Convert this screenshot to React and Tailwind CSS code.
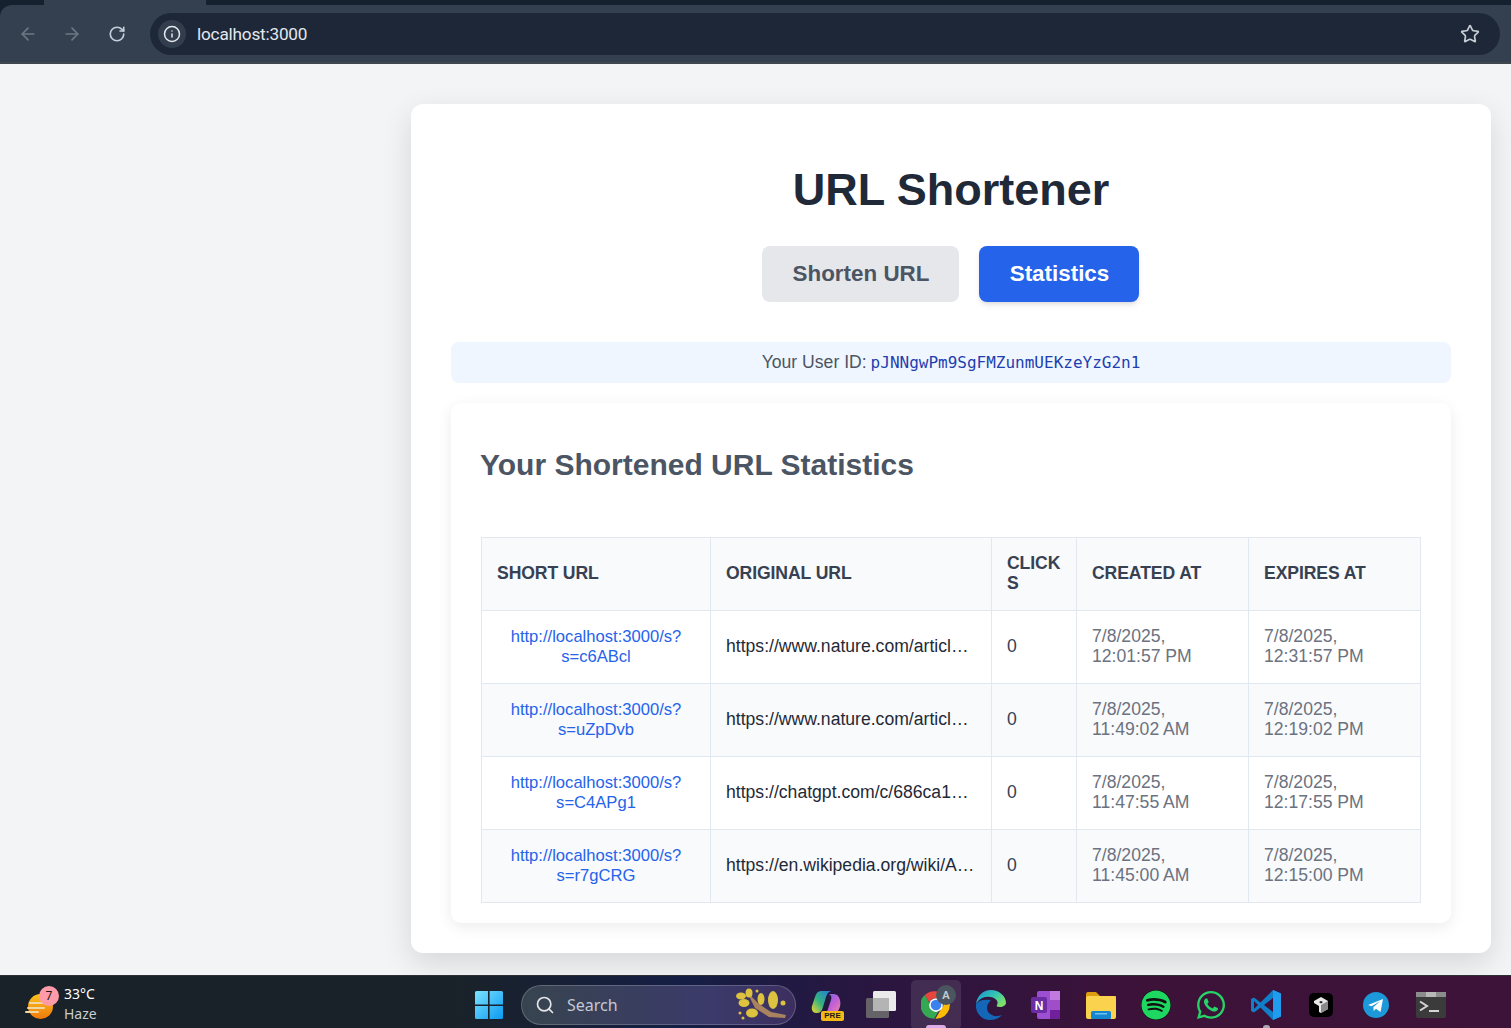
import { ArrowLeft, ArrowRight, RotateCw, Info, Star, Search } from "lucide-react";
import { FaWhatsapp, FaSpotify } from "react-icons/fa";

const rows = [
  {
    short: "http://localhost:3000/s?s=c6ABcl",
    original: "https://www.nature.com/articles/d41586-025-02037-5-with-more-path",
    created: "7/8/2025, 12:01:57 PM",
    expires: "7/8/2025, 12:31:57 PM",
  },
  {
    short: "http://localhost:3000/s?s=uZpDvb",
    original: "https://www.nature.com/articles/d41586-025-01985-2-with-more-path",
    created: "7/8/2025, 11:49:02 AM",
    expires: "7/8/2025, 12:19:02 PM",
  },
  {
    short: "http://localhost:3000/s?s=C4APg1",
    original: "https://chatgpt.com/c/686ca1b2-8c3c-8000-a1f4-0d6c27c1e3f0",
    created: "7/8/2025, 11:47:55 AM",
    expires: "7/8/2025, 12:17:55 PM",
  },
  {
    short: "http://localhost:3000/s?s=r7gCRG",
    original: "https://en.wikipedia.org/wiki/Artificial_intelligence_and_more",
    created: "7/8/2025, 11:45:00 AM",
    expires: "7/8/2025, 12:15:00 PM",
  },
];

const sans = "font-['Liberation_Sans',Arial,sans-serif]";

function BrowserBar() {
  return (
    <header className="relative h-16 shrink-0 bg-[#15212f] pt-[5px]">
      {/* active tab running up into the strip */}
      <div className="absolute left-[44px] top-0 h-[5px] w-[162px] bg-[#344050]" />
      <div className="relative flex h-[59px] items-center rounded-tl-xl border-b-2 border-[#40464e] bg-[#344050] pt-[1px]">
        <div className="flex w-[150px] items-center pl-[18px] gap-[24px]">
          <ArrowLeft size={20} className="text-[#6d7784]" />
          <ArrowRight size={20} className="text-[#6d7784]" />
          <RotateCw size={18} strokeWidth={2.2} className="ml-[2px] text-[#c5cedb]" />
        </div>
        <div className="mr-[11px] flex h-[42px] flex-1 items-center rounded-full bg-[#1d2737] pl-2 pr-5">
          <div className="flex h-[28px] w-[28px] items-center justify-center rounded-full bg-[#323d4d]">
            <Info size={18} className="text-[#e6e9ef]" />
          </div>
          <span className="ml-[11px] flex-1 pt-px font-['Roboto',sans-serif] text-[17.2px] tracking-[-0.2px] text-[#e3e8ef]">
            localhost:3000
          </span>
          <Star size={20} strokeWidth={2} className="text-[#c9ced6]" />
        </div>
      </div>
    </header>
  );
}

function StatsTable() {
  return (
    <table className={`w-[940px] table-fixed border-collapse text-[17.6px] leading-5 ${sans}`}>
      <colgroup>
        <col className="w-[229px]" />
        <col className="w-[281px]" />
        <col className="w-[85px]" />
        <col className="w-[172px]" />
        <col className="w-[172px]" />
      </colgroup>
      <thead>
        <tr className="bg-[#f8fafc] text-left font-bold uppercase text-[#374151]">
          {["Short URL", "Original URL", "Clicks", "Created At", "Expires At"].map((h) => (
            <th key={h} className="border border-[#e2e8f0] px-[15px] pt-[15px] pb-[17px] font-bold break-words tracking-[-0.1px]">
              {h}
            </th>
          ))}
        </tr>
      </thead>
      <tbody>
        {rows.map((r, i) => (
          <tr key={r.short} className={i % 2 === 1 ? "bg-[#f8fafc]" : "bg-white"}>
            <td className="border border-[#e2e8f0] px-[15px] py-4 text-center text-[16.6px] text-[#2563eb]">
              {r.short}
            </td>
            <td className="truncate border border-[#e2e8f0] px-[15px] pt-[15px] pb-[17px] text-[#1f2937]">
              {r.original}
            </td>
            <td className="border border-[#e2e8f0] px-[15px] pt-[15px] pb-[17px] text-[#374151]">0</td>
            <td className="border border-[#e2e8f0] px-[15px] pt-[15px] pb-[17px] text-[#6b7280]">{r.created}</td>
            <td className="border border-[#e2e8f0] px-[15px] pt-[15px] pb-[17px] text-[#6b7280]">{r.expires}</td>
          </tr>
        ))}
      </tbody>
    </table>
  );
}

function WeatherIcon() {
  return (
    <div className="relative -mt-1 h-[34px] w-[36px]">
      <svg width="30" height="30" viewBox="0 0 30 30" className="absolute left-0 top-[6px]">
        <defs>
          <linearGradient id="sun" x1="0" y1="0" x2="0" y2="1">
            <stop offset="0" stopColor="#fcc21b" />
            <stop offset="1" stopColor="#ef7a0c" />
          </linearGradient>
        </defs>
        <circle cx="15.5" cy="14.5" r="12.5" fill="url(#sun)" />
        <g stroke="#eed9a6" strokeWidth="2" strokeLinecap="round">
          <line x1="5" y1="11" x2="24" y2="11" />
          <line x1="3" y1="16" x2="19" y2="16" />
          <line x1="1" y1="20" x2="13" y2="20" />
        </g>
      </svg>
      <div className="absolute left-[14px] top-0 flex h-5 w-5 items-center justify-center rounded-full bg-[#ff9aa8] font-['Noto_Sans',sans-serif] text-[12px] text-[#1a1a1a]">
        7
      </div>
    </div>
  );
}

function WindowsIcon() {
  return (
    <svg width="30" height="30" viewBox="0 0 30 30">
      <defs>
        <linearGradient id="win" x1="0" y1="0" x2="1" y2="1">
          <stop offset="0" stopColor="#7ce2ff" />
          <stop offset="1" stopColor="#0a9af2" />
        </linearGradient>
      </defs>
      <path fill="url(#win)" d="M1 2.500A1.500 1.500 0 0 1 2.500 1H14v13.400H1zM15.600 1h11.900A1.500 1.500 0 0 1 29 2.500v11.900H15.600zM1 16h13v13H2.500A1.500 1.500 0 0 1 1 27.500zM15.600 16H29v11.500a1.500 1.500 0 0 1-1.500 1.500H15.600z" />
    </svg>
  );
}

function Branch() {
  return (
    <svg width="52" height="34" viewBox="0 0 52 34">
      <path d="M12 4 L24 16 L36 24 L51 27 L50 30 L34 29 L20 20 Z" fill="#a9825f" />
      <g fill="#dcc23f">
        <ellipse cx="6" cy="8" rx="5" ry="3.500" />
        <ellipse cx="14" cy="5" rx="3.500" ry="4.500" />
        <ellipse cx="9" cy="15" rx="5.500" ry="4" />
        <ellipse cx="26" cy="11" rx="3.500" ry="6" />
        <ellipse cx="38" cy="12" rx="5" ry="9" />
        <ellipse cx="17" cy="25" rx="6" ry="4.500" />
        <circle cx="22" cy="3" r="1.500" />
        <circle cx="48" cy="15" r="2.500" />
        <circle cx="5" cy="25" r="1.500" />
        <circle cx="8" cy="30" r="1.500" />
      </g>
    </svg>
  );
}

function CopilotIcon() {
  return (
    <div className="relative h-[30px] w-[30px]">
      <svg width="30" height="26" viewBox="0 0 30 26">
        <defs>
          <linearGradient id="cpa" x1="0" y1="1" x2="1" y2="0">
            <stop offset="0" stopColor="#f7d52f" />
            <stop offset="0.45" stopColor="#35b37e" />
            <stop offset="1" stopColor="#2477e3" />
          </linearGradient>
          <linearGradient id="cpb" x1="0" y1="0" x2="1" y2="1">
            <stop offset="0" stopColor="#5f6be8" />
            <stop offset="0.55" stopColor="#c45fd5" />
            <stop offset="1" stopColor="#f08aa0" />
          </linearGradient>
        </defs>
        <path fill="url(#cpa)" d="M10 1h10c-3 1-4 3-5 6l-3 10c-1 4-3 6-6 6H5c-3 0-5-3-4-7l3-9c1-4 3-6 6-6z" />
        <path fill="url(#cpb)" d="M18 4h5c3 0 5 2 6 6s0 8-2 11-3 3-6 3h-9c3 0 4-2 5-5l3-9c1-3 0-5-2-6z" />
      </svg>
      <div className="absolute bottom-[-1px] right-[-3px] flex h-[10px] w-[23px] items-center justify-center rounded-[2px] bg-[#f5b915] font-['Liberation_Sans',sans-serif] text-[8px] font-bold leading-none text-[#1b1b1b]">
        PRE
      </div>
    </div>
  );
}

function TaskViewIcon() {
  return (
    <svg width="30" height="30" viewBox="0 0 30 30">
      <rect x="7" y="1" width="23" height="20" rx="1.500" fill="#ebebeb" />
      <rect x="0" y="8" width="23" height="20" rx="1.500" fill="#6a6a6a" fillOpacity="0.92" />
      <rect x="7" y="8" width="16" height="13" fill="#b4b4b4" />
    </svg>
  );
}

function ChromeIcon() {
  return (
    <svg width="30" height="30" viewBox="0 0 48 48">
      <path fill="#e8453c" d="M24 2a22 22 0 0 1 19 11H24a11 11 0 0 0-10.500 7.500L6 8A22 22 0 0 1 24 2z" />
      <path fill="#34a853" d="M6 8l9.500 16.500A10 10 0 0 0 28 34l-7 12A22 22 0 0 1 6 8z" />
      <path fill="#fbbc05" d="M43 13a22 22 0 0 1-20 33l10-17a10 10 0 0 0-1-16z" />
      <circle cx="24" cy="24" r="11" fill="#fff" />
      <circle cx="24" cy="24" r="8.500" fill="#3b82f0" />
    </svg>
  );
}

function EdgeIcon() {
  return (
    <svg width="30" height="30" viewBox="0 0 30 30">
      <defs>
        <linearGradient id="eg" x1="0" y1="0" x2="1" y2="0.6">
          <stop offset="0" stopColor="#1a8fd8" />
          <stop offset="0.6" stopColor="#33c6b0" />
          <stop offset="1" stopColor="#7ee06a" />
        </linearGradient>
      </defs>
      <path fill="url(#eg)" d="M15 0C7 0 1 6 0 14c3-5 8-8 14-7 6 .5 9 5 7 8-1 1 0 2 3 2s6-2 6-4C30 6 23 0 15 0z" />
      <path fill="#1467b8" d="M0 14c-1 8 5 16 14 16 5 0 9-2 12-5-3 1-7 2-10 0-5-2-6-7-4-11 1-2 2-3 3-4-7-1-12 0-15 4z" />
    </svg>
  );
}

function OneNoteIcon() {
  return (
    <svg width="30" height="30" viewBox="0 0 30 30">
      <rect x="6" y="1" width="23" height="28" rx="2" fill="#9c4fd0" />
      <rect x="19" y="1" width="10" height="9" fill="#c07ae0" />
      <rect x="19" y="10" width="10" height="10" fill="#a04ec8" />
      <rect x="19" y="20" width="10" height="9" fill="#70209a" />
      <rect x="0" y="7" width="16" height="16" rx="2" fill="#6a2ba3" />
      <text x="8" y="19.500" textAnchor="middle" fontSize="12" fontWeight="700" fill="#fff" fontFamily="Liberation Sans">
        N
      </text>
    </svg>
  );
}

function FolderIcon() {
  return (
    <svg width="30" height="27" viewBox="0 0 30 27">
      <path fill="#dd9d0f" d="M0 2a2 2 0 0 1 2-2h8l4 4h16v4H0z" />
      <rect x="0" y="4" width="30" height="23" rx="2" fill="#fbd24e" />
      <rect x="5" y="19" width="20" height="8" rx="1.500" fill="#1686d0" />
      <rect x="9" y="21" width="12" height="1.500" fill="#6fc2ee" />
    </svg>
  );
}

function VsCodeIcon() {
  return (
    <svg width="30" height="30" viewBox="0 0 30 30">
      <path fill="#0f7fc9" d="M22 0 9.500 12.500 3 7.500 0 9v12l3 1.500 6.500-5L22 30l8-3.500v-23z" />
      <path fill="#1f9cf0" d="M22 0l8 3.500v23L22 30z" />
      <path fill="#3f0f3c" d="M22 8 13 15l9 7z" />
      <path fill="#3f0f3c" d="M3 11v8l4-4z" />
    </svg>
  );
}

function CubeIcon() {
  return (
    <div className="flex h-6 w-6 items-center justify-center rounded-[5px] bg-black">
      <svg width="18" height="18" viewBox="0 0 18 18">
        <path fill="#e8e8e8" d="M9 1l7 4v8l-7 4-2-1v-6L2 7V5z" />
        <path fill="#8a8a8a" d="M9 9l7-4v8l-7 4z" />
        <path fill="#1a1a1a" d="M7 6l2-1 2 1-2 1.500z" />
      </svg>
    </div>
  );
}

function TelegramIcon() {
  return (
    <svg width="26" height="26" viewBox="0 0 26 26">
      <circle cx="13" cy="13" r="13" fill="#1d98d8" />
      <path fill="#fff" d="M5 13 20 7l-2.500 13-4.500-3.200-2.300 2.200-.4-3.800 6.700-6-8.400 5z" />
    </svg>
  );
}

function TerminalIcon() {
  return (
    <svg width="30" height="26" viewBox="0 0 30 26">
      <rect width="30" height="26" rx="2" fill="#3b3b3b" />
      <rect width="30" height="5" fill="#8c8c8c" />
      <rect x="10" width="10" height="5" fill="#b8b8b8" />
      <path d="M4 9.500 11 14l-7 4.500" fill="none" stroke="#d4d4d4" strokeWidth="2" />
      <rect x="13" y="18" width="10" height="2" fill="#d4d4d4" />
    </svg>
  );
}

function DockSlot({ active, running, children }) {
  return (
    <div
      className={`relative flex h-[50px] w-[50px] items-center justify-center rounded-[5px] ${
        active ? "bg-white/10" : ""
      }`}
    >
      {children}
      {active && <div className="absolute bottom-[2px] h-[3px] w-5 rounded-t bg-[#dcaae6]" />}
      {running && <div className="absolute bottom-[2px] h-[3px] w-[7px] rounded-t bg-[#b0a5b2]" />}
    </div>
  );
}

function Taskbar() {
  return (
    <footer className="flex h-[53px] shrink-0 items-center overflow-hidden border-t border-[#2c3036] bg-[linear-gradient(90deg,#1a2229_0%,#1a2229_30%,#151f45_45%,#2a1640_58%,#3c1239_75%,#3d133a_100%)] pt-[6px] font-['Noto_Sans',sans-serif]">
      <div className="flex w-[474px] shrink-0 items-center pl-[25px]">
        <WeatherIcon />
        <div className="-mt-[3px] ml-[3px] text-[14px] leading-5">
          <div className="text-white">33°C</div>
          <div className="text-[#c8ccd0]">Haze</div>
        </div>
      </div>
      <WindowsIcon />
      <div className="ml-[17px] flex h-10 w-[275px] items-center rounded-full border border-white/20 bg-[linear-gradient(90deg,#37444f,#3b3a6a_70%,#3c2f5f)] pl-[13px] pr-2">
        <Search size={20} strokeWidth={2} className="text-[#e4e6ea]" />
        <span className="ml-3 flex-1 text-[16px] text-[#c5c8d2]">Search</span>
        <Branch />
      </div>
      <div className="ml-[5px] flex items-center gap-[5px]">
        <DockSlot>
          <CopilotIcon />
        </DockSlot>
        <DockSlot>
          <TaskViewIcon />
        </DockSlot>
        <DockSlot active>
          <div className="relative">
            <ChromeIcon />
            <div className="absolute right-[-5px] top-[-5px] flex h-5 w-5 items-center justify-center rounded-full bg-[#4a5560] text-[11px] font-semibold text-[#c8ccd2]">
              A
            </div>
          </div>
        </DockSlot>
        <DockSlot>
          <EdgeIcon />
        </DockSlot>
        <DockSlot>
          <OneNoteIcon />
        </DockSlot>
        <DockSlot>
          <FolderIcon />
        </DockSlot>
        <DockSlot>
          <FaSpotify size={30} className="rounded-full bg-[#111] text-[#1ed760]" />
        </DockSlot>
        <DockSlot>
          <FaWhatsapp size={32} className="text-[#25d366]" />
        </DockSlot>
        <DockSlot running>
          <VsCodeIcon />
        </DockSlot>
        <DockSlot>
          <CubeIcon />
        </DockSlot>
        <DockSlot>
          <TelegramIcon />
        </DockSlot>
        <DockSlot>
          <TerminalIcon />
        </DockSlot>
      </div>
    </footer>
  );
}

export default function App() {
  return (
    <div className={`flex h-[1028px] w-[1511px] flex-col overflow-hidden bg-[#f3f4f6] ${sans}`}>
      <BrowserBar />

      <main className="flex flex-1 justify-end pr-5 pt-10">
        <div className="h-[849px] w-[1080px] rounded-xl bg-white p-10 shadow-[0_10px_30px_rgba(0,0,0,0.12)]">
          <h1 className="mt-[18px] text-center text-[45px] font-bold leading-[56px] text-[#1f2937]">
            URL Shortener
          </h1>

          {/* Tabs */}
          <div className="mt-[28px] flex justify-center gap-5 pr-[2px]">
            <button className="h-14 w-[197px] rounded-lg bg-[#e5e7eb] pl-[2px] text-[22.4px] font-bold text-[#4b5563]">
              Shorten URL
            </button>
            <button className="h-14 w-[160px] rounded-lg bg-[#2563eb] pl-[2px] text-[22.4px] font-bold text-white shadow-md">
              Statistics
            </button>
          </div>

          <div className="mt-10 flex h-[41px] items-center justify-center gap-1 rounded-lg bg-[#eff6ff] text-[17.6px] text-[#4b5563]">
            <span>Your User ID:</span>
            <span className="font-['DejaVu_Sans_Mono',monospace] text-[16px] text-[#1e40af]">
              pJNNgwPm9SgFMZunmUEKzeYzG2n1
            </span>
          </div>

          <section className="mt-5 h-[520px] rounded-[10px] bg-white p-[30px] shadow-[0_4px_15px_rgba(0,0,0,0.08)]">
            <h2 className="-ml-px mt-3 mb-[52px] text-[30px] font-bold leading-[40px] text-[#4b5563]">
              Your Shortened URL Statistics
            </h2>
            <StatsTable />
          </section>
        </div>
      </main>

      <Taskbar />
    </div>
  );
}
